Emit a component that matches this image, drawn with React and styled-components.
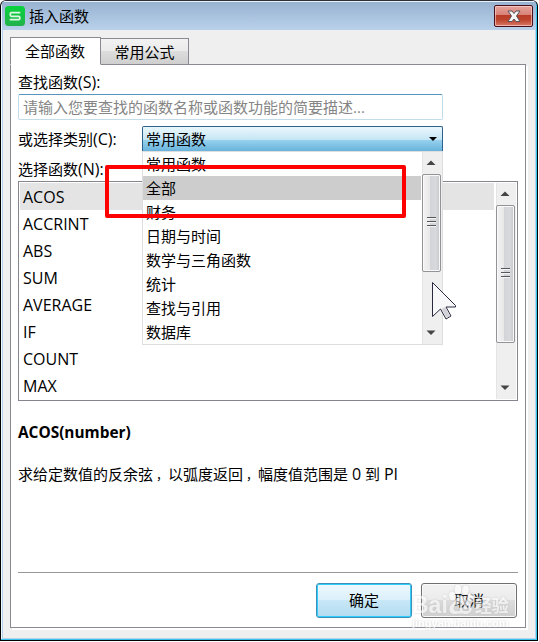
import React, { useState } from 'react'
import styled, { createGlobalStyle, css } from 'styled-components'

const functions = ['ACOS', 'ACCRINT', 'ABS', 'SUM', 'AVERAGE', 'IF', 'COUNT', 'MAX']
const categories = ['常用函数', '全部', '财务', '日期与时间', '数学与三角函数', '统计', '查找与引用', '数据库']

const CloseIcon = () => (
  <svg width="14" height="13" viewBox="0 0 14 13">
    <path d="M1 1h4l2 2.500L9 1h4L9.500 6 13 11.500H9L7 9l-2 2.500H1L4.500 6z" fill="#f5f5f5" stroke="#59515c" strokeWidth="1" />
  </svg>
)

const Logo = () => (
  <svg width="20" height="20" viewBox="0 0 20 20">
    <defs>
      <linearGradient id="logo" x1="0" y1="0" x2="0" y2="1">
        <stop offset="0" stopColor="#08d43c" />
        <stop offset="1" stopColor="#23b14d" />
      </linearGradient>
    </defs>
    <rect width="20" height="20" rx="3.500" fill="url(#logo)" />
    <path d="M15.300 6.700H6.200Q5.300 6.700 5.300 8v1q0 1.300 1.200 1.300h7.200q1.100 0 1.100 1.300v.7q0 1.400-1.200 1.400H4.700" fill="none" stroke="#e0f8e3" strokeWidth="1.700" />
  </svg>
)

const Scroll = ({ thumb }) => (
  <ScrollTrack>
    <ArrowBox>
      <svg width="10" height="6" viewBox="0 0 10 6"><path d="M0.500 5L5 0.500 9.500 5z" fill="#454545" /></svg>
    </ArrowBox>
    <Thumb $height={thumb}>
      <Grip /><Grip /><Grip />
    </Thumb>
    <ArrowBox $bottom>
      <svg width="10" height="6" viewBox="0 0 10 6"><path d="M0.500 0.500h9L5 5z" fill="#454545" /></svg>
    </ArrowBox>
  </ScrollTrack>
)

const Watermark = () => (
  <Mark>
    <MarkRow>
      <span>Bai</span>
      <svg width="25" height="32" viewBox="0 0 25 32">
        <g fill="#fff">
          <ellipse cx="3.500" cy="12" rx="3.200" ry="4.500" transform="rotate(-15 3.5 12)" />
          <ellipse cx="9" cy="5.500" rx="3.300" ry="4.700" />
          <ellipse cx="16.500" cy="6" rx="3.200" ry="4.700" transform="rotate(12 16.5 6)" />
          <ellipse cx="21.500" cy="13" rx="3" ry="4.300" transform="rotate(15 21.5 13)" />
          <path fillRule="evenodd" d="M12 12c4 0 5 4 8 7 6 6 1 12-4 11-3-.6-6-.6-9 0-6 1-9-5-4-10 4-3 5-8 9-8zM6 21q-3 3 0 6h5v-9H9v3zm7 0v4q0 2 2 2h5v-6h-2v4h-3v-4z" />
        </g>
      </svg>
      <MarkCjk>经验</MarkCjk>
    </MarkRow>
    <MarkUrl>jingyan.baidu.com</MarkUrl>
  </Mark>
)

const App = () => {
  const [tab, setTab] = useState(0)
  const [keyword, setKeyword] = useState('')
  const [selected, setSelected] = useState('ACOS')
  const [category, setCategory] = useState('常用函数')
  const [hovered, setHovered] = useState('全部')

  return (
    <Window>
      <GlobalStyle />
      <TitleBar>
        <Logo />
        <Title>插入函数</Title>
        <CloseButton><CloseIcon /></CloseButton>
      </TitleBar>
      <Body>
        <Tabs>
          <Tab $active={tab === 0} onClick={() => setTab(0)}>全部函数</Tab>
          <Tab $active={tab === 1} onClick={() => setTab(1)}>常用公式</Tab>
        </Tabs>
        <Panel>
          <Label>查找函数<Key>(S):</Key></Label>
          <SearchInput
            value={keyword}
            placeholder="请输入您要查找的函数名称或函数功能的简要描述..."
            onChange={(e) => setKeyword(e.target.value)}
          />
          <Row>
            <Label>或选择类别<Key>(C):</Key></Label>
            <Combo>
              {category}
              <svg width="8" height="4" viewBox="0 0 8 4"><path d="M0 0h8L4 4z" fill="#000" /></svg>
              <Popup>
                <Options>
                  {categories.map((c) => (
                    <Option key={c} $active={c === hovered} onMouseEnter={() => setHovered(c)} onClick={() => setCategory(c)}>{c}</Option>
                  ))}
                </Options>
                <Scroll thumb={98} />
              </Popup>
            </Combo>
          </Row>
          <ListLabel>选择函数<Key>(N):</Key></ListLabel>
          <ListBox>
            <Items>
              {functions.map((name) => (
                <Item key={name} $active={name === selected} onClick={() => setSelected(name)}>{name}</Item>
              ))}
            </Items>
            <Scroll thumb={138} />
          </ListBox>
          <Signature>ACOS(number)</Signature>
          <Description>求给定数值的反余弦<Comma>，</Comma>以弧度返回<Comma>，</Comma>幅度值范围是 <Key>0</Key> 到 <Key>PI</Key></Description>
          <Footer>
            <Button $primary>确定</Button>
            <Button>取消</Button>
          </Footer>
        </Panel>
      </Body>
      <Highlight />
      <Cursor width="26" height="40" viewBox="0 0 26 40">
        <path d="M1.500 1.500v34L9.500 28l5.500 10 5-3-5-9h9.500v-1.500z" fill="#f8f8fa" stroke="#292a3d" strokeWidth="1" />
        <path d="M10.500 28l5 9 3.500-2-5-9z" fill="#d2d2d8" />
      </Cursor>
      <Watermark />
    </Window>
  )
}

export default App

const GlobalStyle = createGlobalStyle`
  * { box-sizing: border-box; }
  body {
    margin: 0;
    background: #fff;
    overflow: hidden;
    font: 15px/20px "Open Sans", "Noto Sans CJK SC", sans-serif;
    color: #000;
  }
  svg { display: block; flex: none; }
`

const Window = styled.div`
  position: relative;
  width: 538px;
  height: 641px;
  display: flex;
  flex-direction: column;
  border: 1px solid #000;
  border-top-color: #302e38;
  border-radius: 6px 6px 0 0;
  overflow: hidden;
  background: #efefef;
  box-shadow: inset -1px -1px #35c5ec, inset 1px 1px #f0f8ff, inset 2px 0 #b9d1ea, inset -2px -2px #b9d1ea;
`

const TitleBar = styled.div`
  height: 29px;
  margin: 0 1px;
  flex: none;
  display: flex;
  align-items: center;
  padding: 0 3px;
  border-top: 1px solid #e8f2fb;
  background: linear-gradient(#98b2d1, #b9d1ea);
`

const Title = styled.div`
  flex: 1;
  padding-left: 4px;
`

const CloseButton = styled.button`
  width: 39px;
  height: 22px;
  display: flex;
  align-items: center;
  justify-content: center;
  padding: 0;
  border: 1px solid #47101b;
  border-radius: 2px;
  background: linear-gradient(#e5a39c, #d98176 45%, #b83b26 46%, #bd452d 70%, #d87a69);
  box-shadow: inset 0 0 0 1px rgba(255, 220, 215, 0.6);
`

const Body = styled.div`
  flex: 1;
  display: flex;
  flex-direction: column;
  padding: 7px 9px 11px;
`

const Tabs = styled.div`
  display: flex;
  align-items: flex-end;
  height: 28px;
  margin-bottom: -1px;
  z-index: 1;
`

const Tab = styled.button`
  font: inherit;
  width: 88px;
  height: 27px;
  padding: 0;
  border: 1px solid #898992;
  border-left: none;
  background: linear-gradient(#f2f2f2, #ebebeb 48%, #dddddd 50%, #cfcfcf);
  ${(p) => p.$active && css`
    width: 91px;
    height: 28px;
    padding: 0 1px 1px 0;
    border-left: 1px solid #898992;
    border-bottom-color: #fff;
    background: #fff;
  `}
`

const Panel = styled.div`
  width: 516px;
  height: 564px;
  border: 1px solid #898992;
  box-shadow: 2px 2px #fff;
  background: #fff;
  padding: 8px 7px;
  display: flex;
  flex-direction: column;
`

const Label = styled.label`
  display: block;
  height: 20px;
  line-height: 18px;
  white-space: nowrap;
`

const Key = styled.span`
  font-size: 16px;
`

const ListLabel = styled(Label)`
  margin-top: 8px;
`

const SearchInput = styled.input`
  font: inherit;
  width: 425px;
  height: 26px;
  margin-top: 1px;
  padding: 0 5px 0 4px;
  border: 1px solid #c2dcec;
  border-top-color: #5794bf;
  border-radius: 2px;
  flex: none;
  outline: none;
  &::placeholder { color: #858585; opacity: 1; }
`

const Row = styled.div`
  display: flex;
  align-items: center;
  margin-top: 6px;
  height: 26px;
  ${Label} { width: 124px; line-height: 20px; }
`

const Combo = styled.div`
  position: relative;
  width: 301px;
  height: 26px;
  display: flex;
  align-items: center;
  justify-content: space-between;
  padding: 0 5px 1px 3px;
  border: 1px solid #2c628b;
  border-bottom-color: #8dc3e0;
  border-radius: 2px 2px 0 0;
  background: linear-gradient(#ebf7fc, #c6e6f5 52%, #98d2ef 54%, #68b3db);
`

const Popup = styled.div`
  position: absolute;
  left: -1px;
  top: 24px;
  width: 301px;
  height: 194px;
  z-index: 2;
  display: flex;
  background: #fff;
  border: 1px solid #dedede;
`

const Options = styled.div`
  flex: 1;
`

const Option = styled.div`
  height: 24px;
  line-height: 24px;
  padding-left: 3px;
  margin-right: 1px;
  background: ${(p) => (p.$active ? '#cdcdcd' : 'transparent')};
`

const ScrollTrack = styled.div`
  width: 20px;
  flex: none;
  display: flex;
  flex-direction: column;
  background: #efefef;
  border-left: 1px solid #e4e4e4;
`

const ArrowBox = styled.div`
  height: 22px;
  flex: none;
  display: flex;
  align-items: center;
  justify-content: center;
  padding-right: 3px;
  ${(p) => p.$bottom && css`margin-top: auto;`}
`

const Thumb = styled.div`
  height: ${(p) => p.$height}px;
  width: 19px;
  margin-left: -1px;
  padding: 0 1px 2px 0;
  display: flex;
  flex-direction: column;
  align-items: center;
  justify-content: center;
  gap: 2px;
  border: 1px solid #929297;
  border-radius: 2px;
  box-shadow: inset 0 0 0 1px #f9f9f9;
  background: linear-gradient(90deg, #f3f3f3, #e8e8e9 40%, #d3d4d8 42%, #d8d9dd 75%, #c5c5ca);
`

const Grip = styled.div`
  width: 9px;
  height: 2px;
  border-top: 1px solid #55555a;
  border-bottom: 1px solid #f5f5f5;
`

const ListBox = styled.div`
  width: 500px;
  height: 220px;
  flex: none;
  margin-top: 1px;
  padding: 1px;
  display: flex;
  border: 1px solid #85858e;
`

const Items = styled.div`
  flex: 1;
  margin-right: 2px;
`

const Item = styled.div`
  height: 27px;
  font-size: 16px;
  line-height: 28px;
  padding-left: 3px;
  background: ${(p) => (p.$active ? '#e4e4e4' : 'transparent')};
`

const Signature = styled.div`
  margin-top: 22px;
  font-size: 15.4px;
  font-weight: bold;
`

const Description = styled.div`
  margin-top: 21px;
  white-space: nowrap;
`

const Comma = styled.span`
  display: inline-block;
  width: 15px;
  padding-left: 3px;
  font-size: 12px;
`

const Footer = styled.div`
  width: 500px;
  margin-top: auto;
  display: flex;
  justify-content: flex-end;
  gap: 9px;
  padding: 10px 1px 1px 0;
  border-top: 1px solid #979797;
`

const Button = styled.button`
  font: inherit;
  width: 96px;
  height: 35px;
  padding: 0 0 1px;
  border: 1px solid #707070;
  border-radius: 3px;
  background: linear-gradient(#f2f2f2, #ebebeb 48%, #dddddd 50%, #cfcfcf);
  box-shadow: inset 0 0 0 1px #fafafa;
  ${(p) => p.$primary && css`
    border-color: #3c8fb8;
    background: linear-gradient(#eef8fd, #dbf0fb 48%, #c8e7f7 50%, #b2dbf1);
    box-shadow: inset 0 0 0 1px #2dcffa;
  `}
`

const Highlight = styled.div`
  position: absolute;
  left: 104px;
  top: 164px;
  width: 301px;
  height: 53px;
  z-index: 3;
  border: 4px solid #fe0000;
  border-radius: 2px;
  pointer-events: none;
`

const Cursor = styled.svg`
  position: absolute;
  left: 430px;
  top: 280px;
  z-index: 4;
  pointer-events: none;
`

const Mark = styled.div`
  position: absolute;
  left: 411px;
  top: 583px;
  width: 100px;
  z-index: 4;
  color: #fff;
  opacity: 0.62;
  pointer-events: none;
  filter: drop-shadow(0 0 1px #bbb);
`

const MarkRow = styled.div`
  display: flex;
  height: 32px;
  align-items: flex-end;
  font: bold 23px/22px "Liberation Sans", sans-serif;
  gap: 1px;
`

const MarkCjk = styled.span`
  font: bold 17px/22px "Noto Sans CJK SC", sans-serif;
`

const MarkUrl = styled.div`
  font: bold 11px/14px "Liberation Sans", sans-serif;
`
